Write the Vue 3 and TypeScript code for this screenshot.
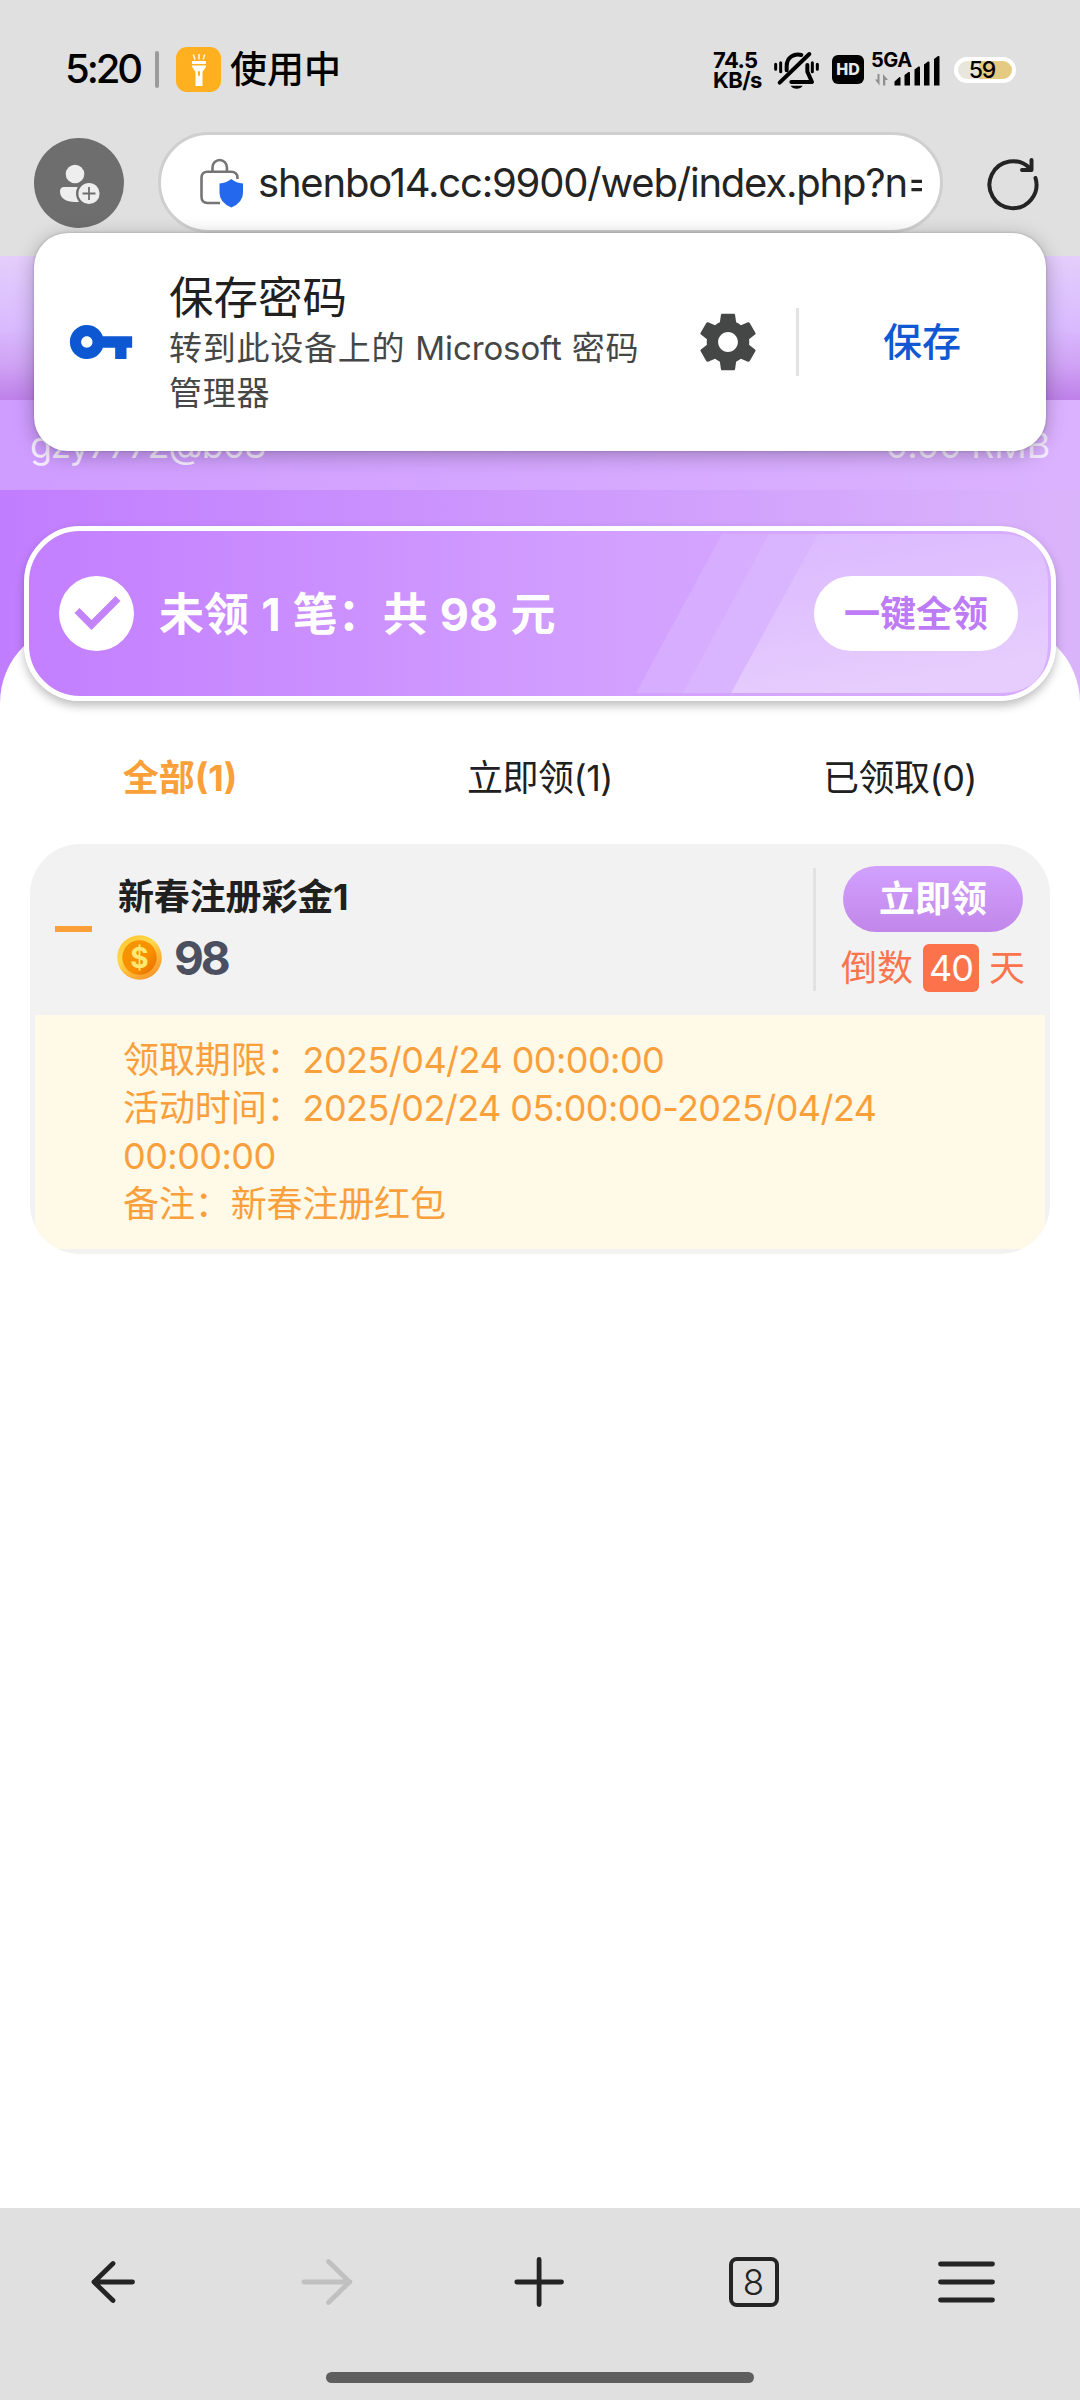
<script setup lang="ts">
import { ref } from 'vue'

interface Tab {
  label: string
  count: number
}

interface Detail {
  label: string
  value: string
}

const tabs: Tab[] = [
  { label: '全部', count: 1 },
  { label: '立即领', count: 1 },
  { label: '已领取', count: 0 },
]
const activeTab = ref(0)

const details: Detail[] = [
  { label: '领取期限', value: '2025/04/24 00:00:00' },
  { label: '活动时间', value: '2025/02/24 05:00:00-2025/04/24 00:00:00' },
  { label: '备注', value: '新春注册红包' },
]
</script>

<template>
  <div class="screen" lang="zh-CN">
    <header class="chrome">
      <div class="status">
        <span class="clock">5:20</span>
        <i class="status-bar"></i>
        <svg class="torch" viewBox="0 0 45 45">
          <rect width="45" height="45" rx="11" fill="#ffb020" />
          <g stroke="#fff" stroke-width="1.6" stroke-linecap="round" opacity=".85">
            <path d="M17.500 8l1.200 4M23 7.500v4.500M28.500 8l-1.200 4" />
          </g>
          <path d="M16 14h14v3H16zM16 18.500h14c0 3-3 4.500-3.500 7V39h-7V25.500C19 23 16 21.500 16 18.500z" fill="#fff" />
          <rect x="22" y="24" width="2" height="5" rx="1" fill="#ffb020" />
        </svg>
        <span class="using">使用中</span>

        <div class="status-right">
          <div class="speed"><span>74.5</span><span>KB/s</span></div>
          <svg class="bell" viewBox="0 0 135 114">
            <g fill="none" stroke="#000" stroke-linecap="round" stroke-linejoin="round">
              <path d="M38 58V45C38 18 62 6 82 12" stroke-width="12" />
              <path d="M100 42V62L114 93H52" stroke-width="12" />
              <path d="M17 95L106 9" stroke-width="12" />
              <path d="M5 40V55M20 35V62M115 35V62M130 40V55" stroke-width="9" />
            </g>
            <path d="M50 104H86C80 116 56 116 50 104Z" />
          </svg>
          <span class="hd">HD</span>
          <div class="signal">
            <span class="net">5GA</span>
            <svg viewBox="0 0 72 34">
              <g fill="#8f8f8f">
                <path d="M9.500 22v11.500L5 27.500h2.500V22zM13 33.500V22l5 6h-2.700v5.500z" />
              </g>
              <path d="M24.500 33.500v-4l5-4.500q1 0 1 1v7.500zM34.500 33.500V23l4-3q1.500-.5 1.500 1v12.500zM44.500 33.500V17.500l4-3q1.500-.5 1.500 1v18zM54 33.500v-21l4-3q1.500-.5 1.500 1v23zM64 33.500V7l4-3q1.500-.5 1.500 1v28.500z" />
            </svg>
          </div>
          <span class="battery">59</span>
        </div>
      </div>

      <div class="toolbar">
        <svg class="avatar" viewBox="0 0 90 90">
          <circle cx="45" cy="45" r="45" fill="#6e6e6e" />
          <circle cx="41" cy="36" r="9.300" fill="#eee" />
          <path d="M30 49h22v15h-11c-9 0-15-4-15-10.500 0-3 1.500-4.500 4-4.500z" fill="#eee" />
          <circle cx="55" cy="55.500" r="11.800" fill="#eee" stroke="#6e6e6e" stroke-width="2.400" />
          <path d="M48.500 55.500h13M55 49v13" stroke="#6e6e6e" stroke-width="1.800" />
        </svg>
        <div class="url">
          <svg class="lock" viewBox="0 0 46 52">
            <g fill="none" stroke="#757575" stroke-width="2.600">
              <path d="M14.500 14V10.500a7.200 7.500 0 0 1 14.400 0V14" />
              <path d="M39.500 22V21q0-6.200-6.500-6.200H9.500q-6 0-6 6.200V39.500q0 6.500 6 6.500H22" />
            </g>
            <path d="M33.300 22q5 4 11.700 4.500V36q0 9.500-11.700 14.500Q21.500 45.500 21.500 36V26.500Q28 26 33.300 22z" fill="#2468ee" />
          </svg>
          <span class="address">shenbo14.cc:9900/web/index.php?n=</span>
        </div>
        <svg class="reload" viewBox="0 0 56 56" fill="none" stroke="#242424" stroke-width="4" stroke-linecap="round" stroke-linejoin="round">
          <path d="M50.500 23A23.500 23.500 0 1 1 45 13.500" />
          <path d="M46.500 5V15H37" />
        </svg>
      </div>
    </header>

    <div class="site-bar"></div>
    <div class="account">
      <span class="user">gzy7772@b08</span>
      <span class="money">0.00 RMB</span>
    </div>

    <section class="hero">
      <div class="claim">
        <svg class="deco" viewBox="0 0 414 159" preserveAspectRatio="none">
          <defs>
            <linearGradient id="sheen" x1="0" y1="0" x2=".35" y2="1">
              <stop offset="0" stop-color="#dcb8ff" />
              <stop offset=".5" stop-color="#e0c2fe" />
              <stop offset="1" stop-color="#e6cdfd" />
            </linearGradient>
          </defs>
          <path d="M86 0H180L94 159H0z" fill="#d7adff" />
          <path d="M133 0H250L160 159H47z" fill="#dab5ff" />
          <path d="M182 0H364Q412 0 412 50V109Q412 159 364 159H95z" fill="url(#sheen)" />
        </svg>
        <svg class="check" viewBox="0 0 75 75">
          <circle cx="37.500" cy="37.500" r="37.500" fill="#fff" />
          <path d="M18 34.500L32.500 49L59 22.500" fill="none" stroke="#c283fb" stroke-width="7" />
        </svg>
        <span class="summary">未领 1 笔：共 98 元</span>
        <button class="claim-all">一键全领</button>
      </div>
    </section>

    <nav class="tabs">
      <a
        v-for="(tab, i) in tabs"
        :key="tab.label"
        :class="{ active: i === activeTab }"
        @click="activeTab = i"
      >{{ tab.label }}({{ tab.count }})</a>
    </nav>

    <article class="bonus">
      <div class="bonus-head">
        <i class="minus"></i>
        <div class="bonus-info">
          <h2>新春注册彩金1</h2>
          <div class="amount">
            <svg viewBox="0 0 45 45">
              <defs>
                <linearGradient id="rim" x1="0" y1="0" x2=".6" y2="1">
                  <stop offset="0" stop-color="#fdc02c" />
                  <stop offset=".45" stop-color="#ffd94a" />
                  <stop offset="1" stop-color="#f99a2c" />
                </linearGradient>
                <linearGradient id="face" x1="0" y1="0" x2="1" y2="1">
                  <stop offset="0" stop-color="#f59600" />
                  <stop offset=".6" stop-color="#f98f00" />
                  <stop offset="1" stop-color="#e36a00" />
                </linearGradient>
              </defs>
              <circle cx="22.500" cy="22.500" r="22.300" fill="url(#rim)" />
              <circle cx="22.500" cy="22.500" r="17.200" fill="url(#face)" />
              <text x="22.500" y="32.800" text-anchor="middle" font-family="Inter" font-weight="700" font-size="28" fill="#ffe972">$</text>
            </svg>
            <span>98</span>
          </div>
        </div>
        <div class="bonus-action">
          <button>立即领</button>
          <div class="countdown"><span>倒数</span><b>40</b><span>天</span></div>
        </div>
      </div>
      <div class="bonus-body">
        <p v-for="d in details" :key="d.label">{{ d.label }}：<span>{{ d.value }}</span></p>
      </div>
    </article>

    <footer class="bottom">
      <div class="nav-row">
        <svg viewBox="0 0 64 64"><path d="M13 32H51.500M32 13.500L13 32L32 50.500" /></svg>
        <svg class="off" viewBox="0 0 64 64"><path d="M9 32H55M33.500 11.500L54.500 32L33.500 52.500" /></svg>
        <svg viewBox="0 0 64 64"><path d="M8.800 32H53.500M31.100 9.500V54.500" /></svg>
        <span class="tab-slot"><span class="tab-count">8</span></span>
        <svg viewBox="0 0 64 64"><path d="M5.500 14H57.500M5.500 32H57.500M5.500 50H57.500" /></svg>
      </div>
      <div class="home"></div>
    </footer>

    <aside class="save-popup">
      <svg class="key" viewBox="0 0 24 24" fill="#0d57d3">
        <path d="M12.650 10C11.830 7.670 9.610 6 7 6c-3.310 0-6 2.690-6 6s2.690 6 6 6c2.610 0 4.830-1.670 5.650-4H17v4h4v-4h2v-4H12.650zM7 14c-1.100 0-2-.9-2-2s.9-2 2-2 2 .9 2 2-.9 2-2 2z" />
      </svg>
      <div class="popup-text">
        <strong>保存密码</strong>
        <p>转到此设备上的 <span>Microsoft</span> 密码管理器</p>
      </div>
      <svg class="gear" viewBox="0 0 24 24" fill="#454746">
        <path d="M19.430 12.980c.04-.32.07-.64.07-.98s-.03-.66-.07-.98l2.110-1.650c.19-.15.24-.42.12-.64l-2-3.460c-.12-.22-.39-.3-.61-.22l-2.490 1c-.52-.4-1.080-.73-1.690-.98l-.38-2.650C14.460 2.180 14.250 2 14 2h-4c-.25 0-.46.18-.49.42l-.38 2.650c-.61.25-1.170.59-1.690.98l-2.490-1c-.23-.09-.49 0-.61.22l-2 3.460c-.13.22-.07.49.12.64l2.110 1.650c-.04.32-.07.65-.07.98s.03.66.07.98l-2.110 1.650c-.19.15-.24.42-.12.64l2 3.460c.12.22.39.3.61.22l2.490-1c.52.4 1.080.73 1.690.98l.38 2.650c.03.24.24.42.49.42h4c.25 0 .46-.18.49-.42l.38-2.650c.61-.25 1.170-.59 1.690-.98l2.490 1c.23.09.49 0 .61-.22l2-3.460c.12-.22.07-.49-.12-.64l-2.110-1.650zM12 15.500c-1.930 0-3.500-1.570-3.500-3.500s1.570-3.500 3.500-3.500 3.500 1.570 3.500 3.500-1.570 3.500-3.500 3.500z" />
      </svg>
      <i class="popup-divider"></i>
      <button class="save">保存</button>
    </aside>
  </div>
</template>

<style>
body {
  background: #fff;
}
</style>

<style scoped>
.screen {
  position: relative;
  display: flex;
  flex-direction: column;
  width: 1080px;
  height: 2400px;
  overflow: hidden;
  background: #fff;
  color: #202020;
  font-family: Inter, "Noto Sans CJK SC", sans-serif;
  font-size: 36px;
}
svg {
  display: block;
  flex: none;
}
button {
  padding: 0;
  border: 0;
  font-family: inherit;
}
.chrome {
  flex: none;
  height: 256px;
  background: #e0e0e0;
}
.status {
  display: flex;
  align-items: center;
  box-sizing: border-box;
  height: 132px;
  padding: 46px 64px 40px 65px;
  color: #000;
}
.clock {
  width: 90px;
  font-size: 40px;
  font-weight: 500;
  line-height: 48px;
  letter-spacing: -3.1px;
}
.status-bar {
  width: 4px;
  height: 37px;
  border-radius: 2px;
  background: #9b9b9b;
}
.torch {
  width: 45px;
  height: 45px;
  margin: 0 9px 0 17px;
}
.using {
  padding-top: 2px;
  font-size: 37px;
  font-weight: 500;
  line-height: 46px;
}
.status-right {
  display: flex;
  align-items: center;
  height: 46px;
  margin-left: auto;
}
.speed {
  display: flex;
  flex-direction: column;
  width: 61px;
  padding-top: 2px;
  font-size: 22px;
  font-weight: 700;
  line-height: 20px;
  letter-spacing: -.6px;
}
.bell {
  width: 45px;
  height: 38px;
  margin-top: 2px;
}
.hd {
  width: 32px;
  height: 29px;
  margin-top: 1px;
  margin-left: 13px;
  border-radius: 6px;
  background: #000;
  color: #e8e8e8;
  font-size: 16px;
  font-weight: 800;
  line-height: 29px;
  text-align: center;
}
.signal {
  position: relative;
  width: 72px;
  height: 34px;
  margin: 0 12px 0 6px;
}
.signal svg {
  width: 72px;
  height: 34px;
}
.net {
  position: absolute;
  top: -2px;
  left: 1px;
  font-size: 20px;
  font-weight: 700;
  line-height: 20px;
  letter-spacing: -.5px;
}
.battery {
  box-sizing: border-box;
  width: 62px;
  height: 26px;
  margin-top: 1px;
  padding-right: 6px;
  border: 4px solid #fff;
  border-radius: 13px;
  background: linear-gradient(90deg, #e9e6dd 0 38%, #e5cb82 40%);
  font-size: 23px;
  font-weight: 500;
  line-height: 18px;
  letter-spacing: -1px;
  text-align: center;
}
.toolbar {
  display: flex;
  align-items: center;
  height: 101px;
  padding: 0 39px 0 34px;
}
.avatar {
  width: 90px;
  height: 90px;
}
.url {
  display: flex;
  align-items: center;
  box-sizing: border-box;
  width: 786px;
  height: 101px;
  margin-left: 34px;
  padding: 0 17px 0 37px;
  border: 3px solid #cfcfcf;
  border-radius: 51px;
  background: #fff;
}
.lock {
  width: 46px;
  height: 52px;
}
.address {
  width: 664px;
  margin-left: 14px;
  overflow: hidden;
  color: #242424;
  font-size: 40px;
  line-height: 58px;
  letter-spacing: -1.2px;
  white-space: nowrap;
}
.reload {
  width: 56px;
  height: 56px;
  margin-left: 42px;
}
.site-bar {
  flex: none;
  height: 144px;
  background: linear-gradient(#e4cefb, #d9baff 50%, #d0a3f5 75%, #be80e9);
}
.account {
  display: flex;
  flex: none;
  justify-content: space-between;
  box-sizing: border-box;
  height: 90px;
  padding: 0 30px;
  background: linear-gradient(90deg, #cf9cff, #dbb2ff);
  color: #f6ecff;
  font-size: 36px;
  line-height: 90px;
}
.user {
  letter-spacing: -1.2px;
}
.money {
  letter-spacing: -.2px;
}
.hero {
  position: relative;
  flex: none;
  box-sizing: border-box;
  height: 214px;
  padding: 36px 24px 0;
  background: linear-gradient(90deg, #c17dff, #dab4fb);
}
.hero::after {
  position: absolute;
  bottom: 0;
  left: 0;
  width: 100%;
  height: 81px;
  border-radius: 80px 80px 0 0;
  background: #fff;
  content: "";
}
.claim {
  position: relative;
  z-index: 1;
  display: flex;
  align-items: center;
  box-sizing: border-box;
  height: 175px;
  padding: 0 33px 0 30px;
  border: 5px solid #fff;
  border-radius: 56px;
  background: linear-gradient(90deg, #c37fff, #d3a1ff 60%, #d8aeff);
  box-shadow: 0 5px 10px rgba(0, 0, 0, .25);
}
.deco {
  position: absolute;
  top: 3px;
  right: 1px;
  width: 414px;
  height: 159px;
}
.check {
  width: 75px;
  height: 75px;
}
.summary {
  margin-left: 25px;
  padding-top: 2px;
  color: #fff;
  font-size: 45px;
  font-weight: 700;
  line-height: 60px;
  word-spacing: 1.5px;
  white-space: nowrap;
}
.claim-all {
  position: relative;
  width: 204px;
  height: 75px;
  margin-left: auto;
  border-radius: 38px;
  background: #fff;
  color: #bd7bf6;
  font-size: 36px;
  font-weight: 700;
  line-height: 76px;
}
.tabs {
  display: flex;
  flex: none;
  height: 140px;
}
.tabs a {
  flex: 1;
  line-height: 149px;
  letter-spacing: -.5px;
  text-align: center;
}
.tabs .active {
  color: #fb9f38;
  font-weight: 700;
  letter-spacing: 0;
}
.bonus {
  flex: none;
  box-sizing: border-box;
  height: 410px;
  margin: 0 30px;
  padding: 0 5px 5px;
  overflow: hidden;
  border-radius: 50px;
  background: #f2f2f2;
}
.bonus-head {
  display: flex;
  height: 171px;
}
.minus {
  flex: none;
  width: 37px;
  height: 6px;
  margin: 82px 26px 0 20px;
  background: #fb9f38;
}
.bonus-info {
  flex: none;
  width: 695px;
  padding-top: 27px;
}
h2 {
  margin: 0;
  font-size: 36px;
  font-weight: 700;
  line-height: 52px;
  letter-spacing: -.15px;
}
.amount {
  display: flex;
  align-items: center;
  height: 45px;
  margin-top: 12px;
  margin-left: -1px;
  color: #4b4f5f;
  font-size: 46px;
  font-weight: 650;
}
.amount svg {
  width: 45px;
  height: 45px;
}
.amount span {
  margin-left: 12px;
  letter-spacing: -3px;
}
.bonus-action {
  display: flex;
  flex: none;
  flex-direction: column;
  box-sizing: border-box;
  width: 214px;
  height: 123px;
  margin-top: 24px;
  padding-left: 27px;
  border-left: 3px solid #e2e2e2;
}
.bonus-action button {
  flex: none;
  width: 180px;
  height: 66px;
  margin-top: -2px;
  border-radius: 33px;
  background: linear-gradient(#d2a1ff, #c186e9);
  color: #fff;
  font-size: 36px;
  font-weight: 700;
  line-height: 67px;
}
.countdown {
  display: flex;
  align-items: center;
  width: 184px;
  height: 48px;
  margin-top: 12px;
  margin-left: -2px;
  color: #fb744d;
  font-size: 36px;
  line-height: 49px;
}
.countdown b {
  width: 56px;
  height: 48px;
  margin: 0 10px;
  border-radius: 6px;
  background: #fc734b;
  color: #fff;
  font-weight: 400;
  letter-spacing: -1px;
  text-align: center;
}
.bonus-body {
  box-sizing: border-box;
  height: 234px;
  padding: 21px 88px;
  background: #fff9e7;
  color: #f9a03c;
}
.bonus-body p {
  margin: 0;
  line-height: 48px;
  letter-spacing: -.1px;
}
.bonus-body span {
  letter-spacing: -.55px;
}
.bonus-body p:last-child span {
  letter-spacing: -.15px;
}
.bottom {
  flex: none;
  box-sizing: border-box;
  height: 192px;
  margin-top: auto;
  background: #e0e0e0;
}
.nav-row {
  display: flex;
  justify-content: space-between;
  align-items: center;
  height: 148px;
  padding: 0 81px;
}
.nav-row svg {
  width: 64px;
  height: 64px;
  fill: none;
  stroke: #242424;
  stroke-width: 4.8;
  stroke-linecap: round;
  stroke-linejoin: round;
}
.nav-row .off {
  stroke: #c0c0c0;
}
.tab-slot {
  display: flex;
  justify-content: center;
  width: 64px;
}
.tab-count {
  box-sizing: border-box;
  width: 50px;
  height: 50px;
  border: 4px solid #242424;
  border-radius: 8px;
  color: #242424;
  font-size: 35px;
  font-weight: 350;
  line-height: 43px;
  text-align: center;
}
.home {
  width: 428px;
  height: 11px;
  margin: 16px auto 0;
  border-radius: 6px;
  background: #5f5f5f;
}
.save-popup {
  position: absolute;
  top: 233px;
  left: 34px;
  z-index: 5;
  display: flex;
  align-items: center;
  box-sizing: border-box;
  width: 1012px;
  height: 218px;
  padding: 0 85px 0 33px;
  border-radius: 34px;
  background: #fff;
  box-shadow: 0 4px 20px rgba(0, 0, 0, .28), 0 0 3px rgba(0, 0, 0, .2);
}
.key {
  width: 68px;
  height: 68px;
}
.popup-text {
  width: 491px;
  margin-left: 34px;
  padding-top: 3px;
}
.popup-text strong {
  display: block;
  color: #202020;
  font-size: 44.5px;
  font-weight: 400;
  line-height: 54px;
}
.popup-text p {
  width: 480px;
  margin: 1px 0 0;
  color: #454746;
  font-size: 33px;
  line-height: 45px;
  letter-spacing: .75px;
}
.popup-text p span {
  letter-spacing: -.1px;
}
.gear {
  width: 68px;
  height: 68px;
  margin-left: 34px;
}
.popup-divider {
  width: 3px;
  height: 68px;
  margin-left: 34px;
  background: #e3e3e3;
}
.save {
  margin-left: auto;
  background: none;
  color: #1158d2;
  font-size: 39px;
  font-weight: 500;
  line-height: 54px;
}
</style>
